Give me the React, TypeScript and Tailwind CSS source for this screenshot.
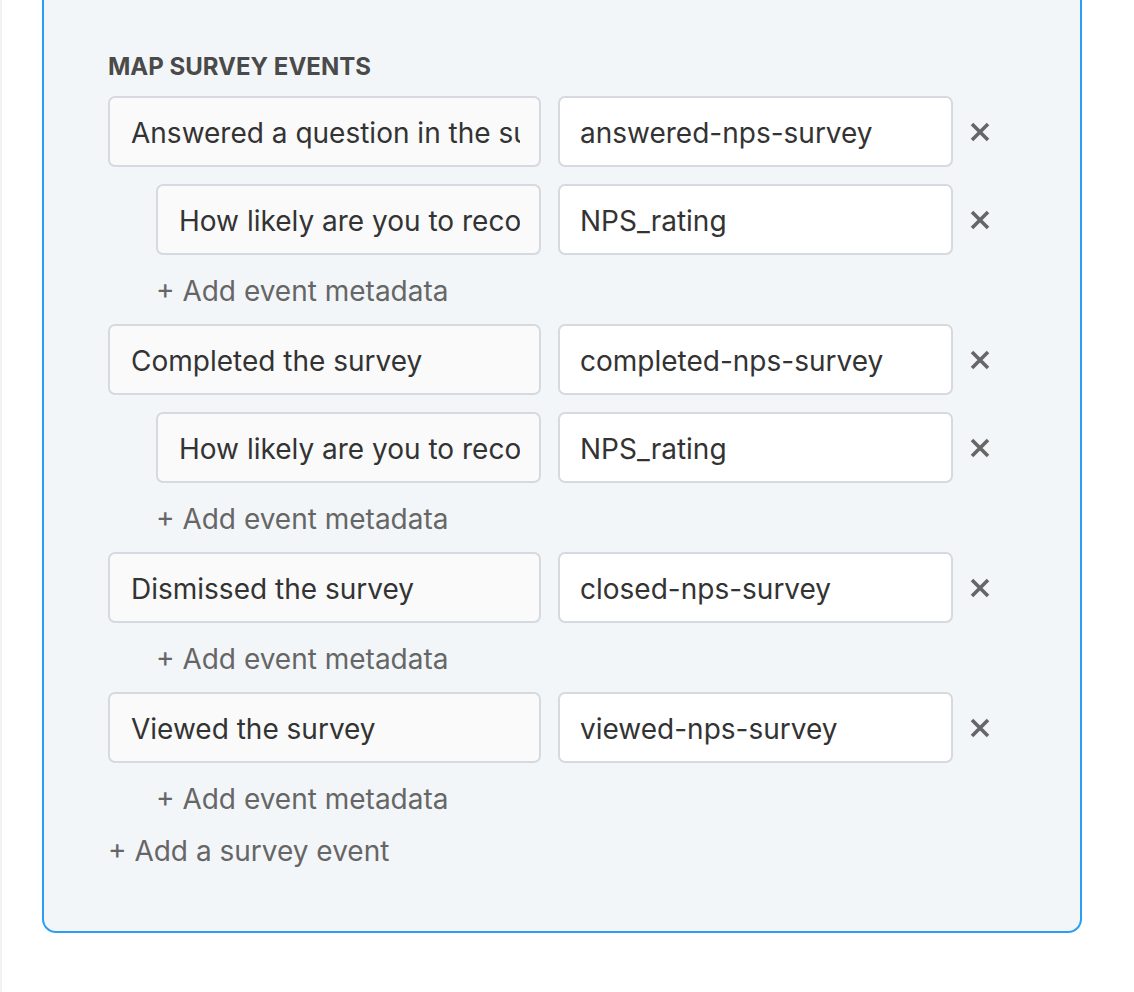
import React from "react";

const font = { fontFamily: "Inter, 'Noto Sans', sans-serif" };

function XIcon() {
  return (
    <button className="flex h-[71px] w-[20px] items-center justify-center" aria-label="remove">
      <svg width="20" height="20" viewBox="0 0 20 20">
        <path d="M2 2 L18 18 M18 2 L2 18" stroke="#666666" strokeWidth="3.6" strokeLinecap="butt" />
      </svg>
    </button>
  );
}

function Row({ left, right, nested }: { left: string; right: string; nested?: boolean }) {
  return (
    <div className={`flex items-center gap-[17px] ${nested ? "pl-[48px]" : ""}`}>
      <input
        readOnly
        value={left}
        className={`h-[71px] ${nested ? "w-[385px]" : "w-[433px]"} rounded-[7px] border-2 border-[#d6d9e0] bg-[#fafafa] pl-[21px] pr-[19px] pt-[3px] text-[28px] text-[#333333] outline-none`}
        style={font}
      />
      <input
        readOnly
        value={right}
        className="h-[71px] w-[395px] rounded-[7px] border-2 border-[#d6d9e0] bg-white px-[20px] pt-[3px] text-[28px] text-[#333333] outline-none"
        style={font}
      />
      <XIcon />
    </div>
  );
}

function AddLink({ children, nested }: { children: React.ReactNode; nested?: boolean }) {
  return (
    <div className={`h-[35px] flex items-center pt-[2px] text-[28px] text-[#666666] ${nested ? "pl-[48px]" : ""}`} style={font}>
      {children}
    </div>
  );
}

export default function App() {
  return (
    <div className="min-h-[992px] w-full bg-white border-l-2 border-[#f1f2f4] overflow-hidden" style={font}>
      <div className="ml-[40px] mr-[52px] -mt-[41px] rounded-[14px] border-2 border-[#2a9df4] bg-[#f3f6f9] pl-[64px] pt-[92px] pb-[64px]">
        <div className="text-[24px] font-bold leading-[28px] text-[#4a4a4a] mb-[15px]">MAP SURVEY EVENTS</div>
        <div className="flex flex-col gap-[17px]">
          <Row left="Answered a question in the survey" right="answered-nps-survey" />
          <Row nested left="How likely are you to recommend us?" right="NPS_rating" />
          <AddLink nested>+ Add event metadata</AddLink>
          <Row left="Completed the survey" right="completed-nps-survey" />
          <Row nested left="How likely are you to recommend us?" right="NPS_rating" />
          <AddLink nested>+ Add event metadata</AddLink>
          <Row left="Dismissed the survey" right="closed-nps-survey" />
          <AddLink nested>+ Add event metadata</AddLink>
          <Row left="Viewed the survey" right="viewed-nps-survey" />
          <AddLink nested>+ Add event metadata</AddLink>
          <AddLink>+ Add a survey event</AddLink>
        </div>
      </div>
    </div>
  );
}
